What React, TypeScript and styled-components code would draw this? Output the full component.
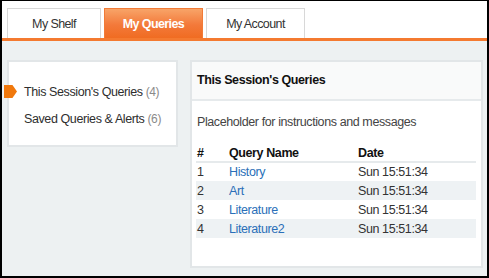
import styled, { createGlobalStyle } from "styled-components";

const GlobalStyle = createGlobalStyle`
  html, body {
    margin: 0;
    padding: 0;
    background: #ffffff;
  }
  * {
    box-sizing: border-box;
  }
`;

const queries = [
  { id: 1, name: "History", date: "Sun 15:51:34" },
  { id: 2, name: "Art", date: "Sun 15:51:34" },
  { id: 3, name: "Literature", date: "Sun 15:51:34" },
  { id: 4, name: "Literature2", date: "Sun 15:51:34" },
];

const App = () => {
  return (
    <Frame>
      <GlobalStyle />
      <TabBar>
        <Tab $width={94}>My Shelf</Tab>
        <Tab $width={99} $active>
          My Queries
        </Tab>
        <Tab $width={99}>My Account</Tab>
      </TabBar>

      <Content>
        <SideNav>
          <NavItem $active>
            <Marker />
            This Session's Queries <Count>(4)</Count>
          </NavItem>
          <NavItem>
            Saved Queries &amp; Alerts <Count>(6)</Count>
          </NavItem>
        </SideNav>

        <Panel>
          <PanelHeader>This Session's Queries</PanelHeader>
          <PanelBody>
            <Message>Placeholder for instructions and messages</Message>
            <Table>
              <thead>
                <tr>
                  <Th $width={32}>#</Th>
                  <Th $width={129}>Query Name</Th>
                  <Th>Date</Th>
                </tr>
              </thead>
              <tbody>
                {queries.map((q, i) => (
                  <Row key={q.id} $striped={i % 2 === 1}>
                    <Td>{q.id}</Td>
                    <Td>
                      <QueryLink href="#">{q.name}</QueryLink>
                    </Td>
                    <Td>{q.date}</Td>
                  </Row>
                ))}
              </tbody>
            </Table>
          </PanelBody>
        </Panel>
      </Content>
    </Frame>
  );
};

export default App;

const Frame = styled.div`
  width: 489px;
  height: 278px;
  border-top: 1px solid #000;
  border-left: 2px solid #000;
  border-right: 2px solid #000;
  border-bottom: 2px solid #000;
  display: flex;
  flex-direction: column;
  font-family: "Liberation Sans", Arial, sans-serif;
  letter-spacing: -0.4px;
  overflow: hidden;
`;

const TabBar = styled.div`
  display: flex;
  gap: 3px;
  padding: 7px 0 0 5px;
  background: #ffffff;
  border-bottom: 3px solid #f47a30;
`;

const Tab = styled.div<{ $active?: boolean; $width: number }>`
  width: ${(p) => p.$width}px;
  height: 30px;
  display: flex;
  align-items: center;
  justify-content: center;
  padding-top: 1px;
  font-size: 12.5px;
  letter-spacing: -0.6px;
  border: 1px solid ${(p) => (p.$active ? "#f27b37" : "#d8d8d8")};
  border-bottom: none;
  background: ${(p) =>
    p.$active ? "linear-gradient(#f8a468, #f3793a 55%, #f06c22)" : "#ffffff"};
  color: ${(p) => (p.$active ? "#ffffff" : "#333333")};
  font-weight: ${(p) => (p.$active ? 700 : 400)};
`;

const Content = styled.div`
  flex: 1;
  display: flex;
  align-items: flex-start;
  gap: 12px;
  padding: 19px 4px 8px 5px;
  background: #edf1f2;
`;

const SideNav = styled.div`
  position: relative;
  width: 172px;
  height: 87px;
  background: #ffffff;
  border: 2px solid #e2e6e8;
  padding: 22px 0 0 15px;
  display: flex;
  flex-direction: column;
  gap: 11px;
`;

const NavItem = styled.div<{ $active?: boolean }>`
  position: relative;
  font-size: 12.5px;
  color: #2e2e2e;
  line-height: 16px;
  white-space: nowrap;
`;

const Marker = styled.span`
  position: absolute;
  left: -20px;
  top: 1px;
  width: 13px;
  height: 13px;
  background: #f0780c;
  clip-path: polygon(0 0, 65% 0, 100% 50%, 65% 100%, 0 100%);
`;

const Count = styled.span`
  color: #8a8a8a;
  font-size: 12px;
`;

const Panel = styled.div`
  flex: 1;
  align-self: stretch;
  background: #ffffff;
  border: 2px solid #e2e6e8;
  display: flex;
  flex-direction: column;
`;

const PanelHeader = styled.div`
  height: 39px;
  display: flex;
  align-items: center;
  padding: 0 0 2px 5px;
  background: #f9fafa;
  border-bottom: 2px solid #e6eaec;
  font-size: 12.5px;
  font-weight: 700;
  color: #111111;
`;

const PanelBody = styled.div`
  padding: 14px 5px 0 4px;
`;

const Message = styled.div`
  font-size: 12.5px;
  color: #444444;
  padding-left: 1px;
  margin-bottom: 16px;
`;

const Table = styled.table`
  width: 280px;
  border-collapse: collapse;
  font-size: 12.5px;
`;

const Th = styled.th<{ $width?: number }>`
  width: ${(p) => (p.$width ? `${p.$width}px` : "auto")};
  text-align: left;
  font-weight: 700;
  color: #111111;
  padding: 0 0 1px 1px;
  height: 17px;
  border-bottom: 2px solid #e6eaec;
`;

const Row = styled.tr<{ $striped?: boolean }>`
  background: ${(p) => (p.$striped ? "#eef2f4" : "#ffffff")};
`;

const Td = styled.td`
  height: 19px;
  padding: 0 0 0 1px;
  color: #333333;
`;

const QueryLink = styled.a`
  color: #2a6fb8;
  text-decoration: none;
`;
